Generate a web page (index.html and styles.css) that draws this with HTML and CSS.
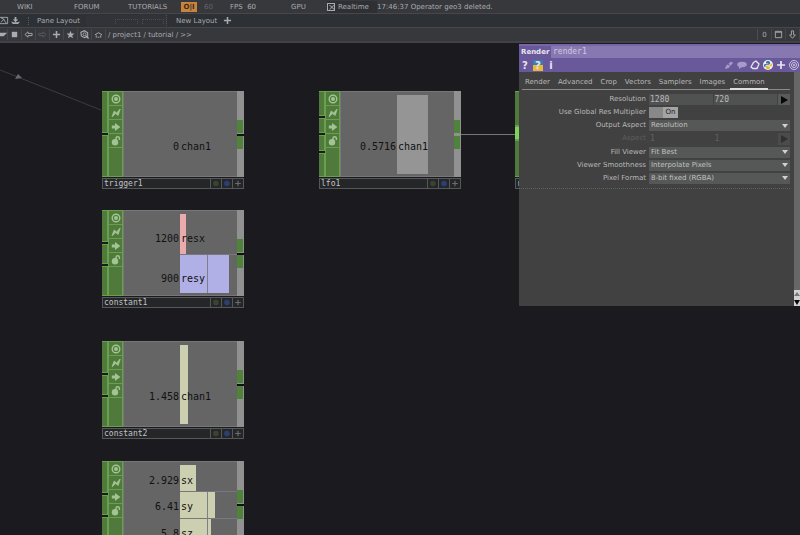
FILE: index.html
```html
<!DOCTYPE html>
<html lang="en">
<head>
<meta charset="utf-8">
<title>Network editor</title>
<link rel="stylesheet" href="styles.css">
</head>
<body>
<svg class="defs" aria-hidden="true">
  <symbol id="target" viewBox="0 0 10 10"><circle cx="5" cy="5" r="3.8" fill="none" stroke="currentColor" stroke-width="1.4"/><circle cx="5" cy="5" r="2" fill="currentColor"/></symbol>
  <symbol id="bolt" viewBox="0 0 10 10"><path d="M1 8.8 3.2 3 5.5 5 9.2 1 7.2 7.4 4.6 5.600Z" fill="currentColor" stroke="currentColor" stroke-width=".8"/></symbol>
  <symbol id="go" viewBox="0 0 10 10"><path d="M.8 3.4h3.2V.9L9.400 5 4 9.100V6.600H.8Z" fill="currentColor"/></symbol>
  <symbol id="lock" viewBox="0 0 10 10"><circle cx="4" cy="6.300" r="3.200" fill="currentColor"/><path d="M5 4V2.500a1.700 1.700 0 0 1 3.400 0V4" fill="none" stroke="currentColor" stroke-width="1.500"/></symbol>
  <symbol id="plus" viewBox="0 0 10 10"><path d="M5 1v8M1 5h8" fill="none" stroke="currentColor" stroke-width="1.7"/></symbol>
  <symbol id="dot" viewBox="0 0 10 10"><path d="M3 1h4l2 3v2.500L6.500 9H3L1 6.500V3Z" fill="currentColor"/></symbol>
  <symbol id="star" viewBox="0 0 10 10"><path d="M5 .8 6.2 3.8 9.4 4 6.9 6 7.800 9.200 5 7.400 2.200 9.200 3.100 6 .6 4 3.800 3.800Z" fill="currentColor"/></symbol>
  <symbol id="left" viewBox="0 0 10 10"><path d="M1 5 4.500 2V3.800H9V6.200H4.500V8Z" fill="none" stroke="currentColor"/></symbol>
  <symbol id="right" viewBox="0 0 10 10"><path d="M9 5 5.500 2V3.800H1V6.200H5.500V8Z" fill="none" stroke="currentColor"/></symbol>
  <symbol id="down" viewBox="0 0 10 10"><path d="M5 9.200 1.800 5.500H3.800V1H6.200V5.500H8.200Z" fill="none" stroke="currentColor"/></symbol>
  <symbol id="home" viewBox="0 0 10 10"><path d="M1 5.500 5 3l4 2.500M2.500 6v2.500M7.500 6v2.500M4 8h2" fill="none" stroke="currentColor" stroke-width="1.1"/></symbol>
  <symbol id="find" viewBox="0 0 10 10"><path d="M1 2.500 5 .8 8.500 3v4L5 8.500 1.500 6.500Z" fill="none" stroke="currentColor" stroke-width="1.200"/><circle cx="5" cy="4.800" r="1.600" fill="none" stroke="currentColor"/><path d="m6.500 6.500 3 3" stroke="currentColor" stroke-width="1.500"/></symbol>
</svg>

<header>
  <nav class="bar menu">
    <a href="#" class="wiki">WIKI</a><a href="#" class="forum">FORUM</a><a href="#" class="tutorials">TUTORIALS</a>
    <button class="oii">O|I</button><span class="rate">60</span><span class="fps">FPS&nbsp; 60</span><span class="gpu">GPU</span>
    <label class="realtime"><input type="checkbox" checked>Realtime</label>
    <output class="message">17:46:37 Operator geo3 deleted.</output>
  </nav>
  <div class="bar layouts">
    <button aria-label="Image"><svg viewBox="0 0 10 10"><path d="M0 1.500h8.500v7H0M1 7l3-3 3 4M1 2l4 2" fill="none" stroke="currentColor"/></svg></button>
    <button aria-label="Save"><svg viewBox="0 0 10 10"><path d="M4 1h2v3h2L5 7 2 4h2ZM0 6l2 3h6l2-3-3 1H3Z" fill="currentColor"/></svg></button>
    <span class="grip"></span>
    <span class="pane-label">Pane Layout</span>
    <span class="slots"><i></i><i></i></span>
    <span class="new-label">New Layout</span>
    <button aria-label="Add layout"><svg><use href="#plus"/></svg></button>
  </div>
  <div class="bar path">
    <button class="first" aria-label="Pane type"><svg viewBox="0 0 10 10"><path d="M0 3h8L4 7H0Z" fill="currentColor"/></svg></button>
    <button aria-label="Stop"><svg viewBox="0 0 10 10"><path d="M2 2h6v6H2Z" fill="currentColor"/></svg></button>
    <button aria-label="Back"><svg><use href="#left"/></svg></button>
    <button class="dim" aria-label="Forward"><svg><use href="#right"/></svg></button>
    <button aria-label="Add"><svg><use href="#plus"/></svg></button>
    <button aria-label="Bookmark"><svg><use href="#star"/></svg></button>
    <button aria-label="Find"><svg><use href="#find"/></svg></button>
    <button aria-label="Home"><svg><use href="#home"/></svg></button>
    <span class="crumbs">/ project1 / tutorial / &gt;&gt;</span>
    <div class="pane-tools">
      <button>0</button>
      <button aria-label="Maximize"><svg viewBox="0 0 10 10"><path d="M1.500 1.500h7v7h-7ZM1.500 2.500h7" fill="none" stroke="currentColor"/></svg></button>
      <button aria-label="Split"><svg><use href="#down"/></svg></button>
    </div>
  </div>
</header>

<main class="network">
  <svg class="wires" aria-hidden="true">
    <path d="M0 27 101 67" stroke="#3c3c42"/><path d="M15 36 18 31 22 35Z" fill="#666872"/>
    <path d="M461 91.500H516" stroke="#77777a"/>
  </svg>

  <article class="node trigger">
    <div class="inputs"><i></i><i></i></div>
    <div class="flags"><button aria-label="Viewer"><svg><use href="#target"/></svg></button><button aria-label="Clone"><svg><use href="#bolt"/></svg></button><button aria-label="Bypass"><svg><use href="#go"/></svg></button><button aria-label="Lock"><svg><use href="#lock"/></svg></button></div>
    <div class="view"><div class="chan"><span class="val">0</span><span class="name">chan1</span></div></div>
    <div class="outputs"><i></i><i></i></div>
    <footer><span>trigger1</span><svg class="g"><use href="#dot"/></svg><svg class="b"><use href="#dot"/></svg><svg><use href="#plus"/></svg></footer>
  </article>

  <article class="node lfo">
    <div class="inputs four"><i></i><i></i><i></i><i></i></div>
    <div class="flags"><button aria-label="Viewer"><svg><use href="#target"/></svg></button><button aria-label="Clone"><svg><use href="#bolt"/></svg></button><button aria-label="Bypass"><svg><use href="#go"/></svg></button><button aria-label="Lock"><svg><use href="#lock"/></svg></button></div>
    <div class="view"><div class="chan"><span class="val">0.5716</span><span class="name gray" style="--w:31px">chan1</span></div></div>
    <div class="outputs linked"><i></i><i></i></div>
    <footer><span>lfo1</span><svg class="g"><use href="#dot"/></svg><svg class="b"><use href="#dot"/></svg><svg><use href="#plus"/></svg></footer>
  </article>

  <article class="node constant1">
    <div class="inputs three"><i></i><i></i><i></i></div>
    <div class="flags"><button aria-label="Viewer"><svg><use href="#target"/></svg></button><button aria-label="Clone"><svg><use href="#bolt"/></svg></button><button aria-label="Bypass"><svg><use href="#go"/></svg></button><button aria-label="Lock"><svg><use href="#lock"/></svg></button></div>
    <div class="view"><div class="chan"><span class="val">1200</span><span class="name pink" style="--w:6px">resx</span></div><div class="chan"><span class="val">900</span><span class="name lilac tick" style="--w:49px">resy</span></div></div>
    <div class="outputs"><i></i><i></i></div>
    <footer><span>constant1</span><svg class="g"><use href="#dot"/></svg><svg class="b"><use href="#dot"/></svg><svg><use href="#plus"/></svg></footer>
  </article>

  <article class="node constant2">
    <div class="inputs three"><i></i><i></i><i></i></div>
    <div class="flags"><button aria-label="Viewer"><svg><use href="#target"/></svg></button><button aria-label="Clone"><svg><use href="#bolt"/></svg></button><button aria-label="Bypass"><svg><use href="#go"/></svg></button><button aria-label="Lock"><svg><use href="#lock"/></svg></button></div>
    <div class="view"><div class="chan"><span class="val">1.458</span><span class="name cream" style="--w:8px">chan1</span></div></div>
    <div class="outputs"><i></i><i></i></div>
    <footer><span>constant2</span><svg class="g"><use href="#dot"/></svg><svg class="b"><use href="#dot"/></svg><svg><use href="#plus"/></svg></footer>
  </article>

  <article class="node scale">
    <div class="inputs three"><i></i><i></i><i></i></div>
    <div class="flags"><button aria-label="Viewer"><svg><use href="#target"/></svg></button><button aria-label="Clone"><svg><use href="#bolt"/></svg></button><button aria-label="Bypass"><svg><use href="#go"/></svg></button><button aria-label="Lock"><svg><use href="#lock"/></svg></button></div>
    <div class="view"><div class="chan"><span class="val">2.929</span><span class="name cream" style="--w:16px">sx</span></div><div class="chan"><span class="val">6.41</span><span class="name cream tick" style="--w:35px">sy</span></div><div class="chan"><span class="val">5.8</span><span class="name cream tick" style="--w:31px">sz</span></div></div>
    <div class="outputs"><i></i><i></i></div>
    <footer></footer>
  </article>

  <article class="node target">
    <div class="inputs single"><i></i><i></i><i></i></div>
    <div class="flags"></div><div class="view"></div><div class="outputs"></div>
    <footer><span>r</span></footer>
  </article>

  <section class="params">
    <div class="head">
      <div class="title"><label for="opname">Render</label><input id="opname" value="render1"></div>
      <div class="tools">
        <button>?</button>
        <button class="pyhelp">?</button>
        <button>i</button>
        <span class="spacer"></span>
        <button class="soft" aria-label="Edit"><svg viewBox="0 0 10 10"><path d="M1 9 2 6 7 1.500 9 3 4.500 8Z" fill="currentColor"/><path d="m4 4 2.500 2" stroke="#6a5a96"/></svg></button>
        <button class="soft" aria-label="Comment"><svg viewBox="0 0 10 10"><ellipse cx="5" cy="4.500" rx="4.800" ry="2.800" fill="currentColor"/><path d="M2 6v3l3-2" fill="currentColor"/></svg></button>
        <button aria-label="Copy"><svg viewBox="0 0 10 10"><path d="M3.500 2.500 6 1l3 3-2 4.500H3L1 7Z" fill="none" stroke="currentColor" stroke-width="1.300"/></svg></button>
        <button aria-label="Python"><svg viewBox="0 0 10 10"><circle cx="5" cy="5" r="5" fill="#f3f3f5"/><path d="M5 1C3.500 1 3 1.600 3 2.500v1h2.300V4H2C1 4 .8 5 1 6c.2.800.7 1.200 1.500 1.200V6c0-.8.500-1.300 1.300-1.300h2C6.600 4.700 7 4.200 7 3.500v-1C7 1.600 6.400 1 5 1Z" fill="#3674a8"/><path d="M5 9.200c1.500 0 2-.6 2-1.500v-.900H4.800v-.500H8c1 0 1.200-.8 1-1.900-.2-.9-.7-1.200-1.500-1.200v1c0 .8-.5 1.300-1.300 1.300h-2C3.400 5.500 3 6 3 6.700v1c0 .9.600 1.500 2 1.500Z" fill="#e9b92e"/></svg></button>
        <button aria-label="Add parameter"><svg><use href="#plus"/></svg></button>
        <button aria-label="Viewer"><svg viewBox="0 0 10 10"><g fill="none" stroke="#cbc3df"><circle cx="5" cy="5" r="4.500"/><circle cx="5" cy="5" r="2.500"/></g><circle cx="5" cy="5" r="1" fill="#cbc3df"/></svg></button>
      </div>
    </div>
    <div class="content">
      <div class="page">
        <nav class="tabs"><a href="#">Render</a><a href="#">Advanced</a><a href="#">Crop</a><a href="#">Vectors</a><a href="#">Samplers</a><a href="#">Images</a><a href="#" class="on">Common</a></nav>
        <form>
          <label for="resw">Resolution</label><div class="pair"><input id="resw" value="1280"><input aria-label="Resolution height" value="720"><button type="button" aria-label="Resolution menu"></button></div>
          <label for="mult">Use Global Res Multiplier</label><button type="button" id="mult" class="switch"><span>On</span></button>
          <label for="oa">Output Aspect</label><div class="drop"><select id="oa"><option>Resolution</option></select></div>
          <label class="off" for="asp">Aspect</label><div class="pair off"><input id="asp" value="1" disabled><input aria-label="Aspect height" value="1" disabled><button type="button" aria-label="Aspect menu" disabled></button></div>
          <label for="fv">Fill Viewer</label><div class="drop"><select id="fv"><option>Fit Best</option></select></div>
          <label for="vs">Viewer Smoothness</label><div class="drop"><select id="vs"><option>Interpolate Pixels</option></select></div>
          <label for="pf">Pixel Format</label><div class="drop"><select id="pf"><option>8-bit fixed (RGBA)</option></select></div>
        </form>
      </div>
      <div class="scroll"><button aria-label="Scroll up" class="up"></button><button aria-label="Scroll down" class="dn"></button></div>
    </div>
  </section>
</main>
</body>
</html>
```
FILE: styles.css
```css
* { box-sizing: border-box; }
body {
  margin: 0; height: 100vh; overflow: hidden;
  display: flex; flex-direction: column;
  background: #1b1a1f; color: #a9abb0;
  font: 7px/12px "DejaVu Sans", sans-serif;
}
button, input, select { font: inherit; color: inherit; background: none; border: 0; padding: 0; margin: 0; border-radius: 0; }
a { color: inherit; text-decoration: none; }
svg { display: block; width: 9px; height: 9px; }
.defs { position: absolute; width: 0; height: 0; }

/* Toolbars */
.bar { display: flex; align-items: center; height: 14px; white-space: nowrap; background: #37383c; border-bottom: 1px solid #46474a; }
.wiki { width: 57px; margin-left: 17px; }
.forum { width: 54px; }
.tutorials { width: 53px; }
.oii { width: 16px; height: 10px; line-height: 10px; background: #c8843f; color: #3a2a1c; font-weight: bold; }
.rate { width: 26px; padding-left: 7px; color: #626469; }
.fps { width: 61px; padding-left: 7px; }
.gpu { width: 43px; padding-left: 7px; }
.realtime { display: flex; align-items: center; gap: 3px; width: 50px; background: #2e3034; }
.realtime input { appearance: none; width: 8px; height: 8px; border: 1px solid #a9abb0; display: grid; place-items: center; }
.realtime input:checked::after { content: "×"; font-size: 9px; line-height: 6px; }
.layouts { background: #2d3034; }
.layouts button { width: 15px; display: grid; place-items: center; }
.layouts button:first-child { width: 8px; }
.grip { width: 6px; height: 8px; border-right: 1px dotted #55575c; }
.pane-label { width: 57px; padding-left: 8px; }
.slots { display: flex; align-items: end; gap: 4px; width: 81px; height: 11px; padding: 0 2px 2px 29px; background: #313338; border-right: 1px dotted #55575c; }
.slots i { flex: 1; height: 5px; border: 1px dotted #4b4d52; border-bottom: 0; }
.new-label { width: 53px; padding-left: 9px; }
.path { height: 15px; border-bottom: 2px solid #404247; }
.path button { width: 14px; height: 11px; display: grid; place-items: center; border-right: 1px solid #45474c; }
.path .first { width: 8px; }
.path .dim { color: #595b61; }
.crumbs { padding-left: 2px; }
.pane-tools { display: flex; margin-left: auto; border-left: 1px solid #4b4d52; }

/* Network canvas */
.network { position: relative; flex: 1; overflow: hidden; }
.wires { position: absolute; inset: 0; width: 100%; height: 100%; fill: none; }
.node {
  position: absolute; width: 142px; height: 98px;
  display: grid; grid-template: 86px 11px / 6px 15px 1fr 7px; row-gap: 1px;
  color: #111; font: 10px/12px "DejaVu Sans Mono", monospace;
}
.trigger { left: 102px; top: 48px; }
.lfo { left: 319px; top: 48px; }
.constant1 { left: 102px; top: 167px; }
.constant2 { left: 102px; top: 298px; }
.scale { left: 102px; top: 418px; }
.target { left: 515px; top: 48px; }
.inputs { display: grid; grid-template-rows: 42px 1fr; gap: 2px; }
.inputs.three { grid-template-rows: 32px 20px 1fr; }
.inputs.four { grid-template-rows: 25px 15px 16px 1fr; }
.inputs i { background: #4f7a3b; border: solid #69a04d; border-width: 1px 1px 1px 0; }
.inputs.single { grid-template-rows: 35px 14px 1fr; gap: 0; }
.inputs.single i:nth-child(2) { background: #7fd05c; }
.flags { display: flex; flex-direction: column; background: #4f7a3b; border: 1px solid #69a04d; border-left: 0; }
.flags button { height: 14px; display: grid; place-items: center; border: solid #69a04d; border-width: 0 0 1px 1px; color: #a2c492; }
.flags svg { width: 10px; height: 10px; }
.flags::after { content: ""; flex: 1; border-left: 1px solid #69a04d; }
.view { display: flex; flex-direction: column; padding: 3px 0 2px; background: #656565; border: solid #777; border-width: 1px 0 1px 1px; overflow: hidden; }
.chan { flex: 1; display: grid; grid-template-columns: 56px 1fr; }
.val, .name { display: flex; flex-direction: column; }
.val { align-items: end; padding-right: 1px; }
.val::before, .name::before { content: ""; flex: 9; }
.val::after, .name::after { content: ""; flex: 4; }
.name { padding-left: 1px; background: linear-gradient(var(--bar, transparent) 0 0) 0 0 / var(--w, 0) 100% no-repeat; }
.tick { background-image: linear-gradient(90deg, var(--bar) 27px, #7f7f86 27px 28px, var(--bar) 28px); box-shadow: inset 0 1px #77777c; }
.gray { --bar: #959595; }
.pink { --bar: #e9abab; }
.lilac { --bar: #b0afe6; }
.cream { --bar: #cccfb0; }
.outputs { display: grid; grid-template-rows: 13px 13px; gap: 3px; align-content: center; padding-top: 1px; background: linear-gradient(#101012 0 0) 0 43px / 7px 2px no-repeat #919191; }
.outputs.linked { background: #919191; }
.outputs i { background: #4f823b; margin-right: 1px; }
.node footer { grid-column: 1 / -1; display: flex; background: #252628; border: 1px solid #55575a; color: #c2c4c6; font-size: 8px; line-height: 9px; }
.node footer span { flex: 1; padding-left: 1px; }
.node footer svg { width: 11px; height: 9px; padding: 1px; border-left: 1px solid #55575a; color: #6a6b6d; }
.node footer .g { color: #39442f; }
.node footer .b { color: #2b3f70; }

/* Parameter panel */
.params { position: absolute; top: 1px; right: 0; width: 281px; height: 262px; display: flex; flex-direction: column; background: #414141; color: #b8b8b8; }
.head { background: #69599a; color: #e8e5f0; border-top: 2px solid #7766a5; }
.title { display: flex; height: 12px; font-weight: bold; }
.title label { width: 32px; padding-left: 2px; }
.title input { flex: 1; min-width: 0; padding-left: 2px; background: #8878b1; color: #d0c8e2; font: 8px/12px "DejaVu Sans Mono", monospace; }
.tools { display: flex; gap: 3px; height: 14px; align-items: center; padding: 0 1px; }
.tools button { width: 10px; height: 11px; display: grid; place-items: center; font-size: 10px; line-height: 11px; font-weight: bold; }
.tools svg { width: 10px; height: 10px; }
.tools .pyhelp { background: linear-gradient(#3c7cb0 50%, #e6b93a 50%); }
.tools .soft { color: #a99bc9; }
.spacer { flex: 1; }
.content { flex: 1; display: flex; min-height: 0; }
.page { flex: 1; min-width: 0; padding: 3px 4px 0 0; }
.tabs { display: flex; gap: 2px; margin-left: 3px; height: 15px; border-bottom: 1px solid #8a8a8a; line-height: 15px; }
.tabs a { padding: 0 3px; height: 15px; }
.tabs .on { border-bottom: 2px solid #dedede; }
form { display: grid; grid-template-columns: 127px minmax(0, 1fr); grid-auto-rows: 1fr; column-gap: 3px; height: 99px; padding: 3px 0; border-bottom: 1px dotted #606060; }
form > label { text-align: right; line-height: 13px; }
form > label.off { color: #5e5e5e; }
.pair, .drop { display: flex; gap: 1px; margin: 1px 0; }
.pair input { flex: 1; min-width: 0; padding-left: 1px; background: #505151; font: 8px/11px "DejaVu Sans Mono", monospace; }
.pair button { width: 12px; background: #5a5a5a; color: #080808; display: grid; place-items: center; }
.pair button::after { content: ""; border: 4px solid transparent; border-left: 7px solid currentColor; border-right: 0; }
.pair.off input { background: none; color: #626262; }
.pair.off button { background: #4b4b4b; color: #303030; }
.drop { background: #555857; align-items: center; }
.drop select { flex: 1; min-width: 0; appearance: none; padding-left: 2px; color: #c0c0c0; line-height: 11px; }
.drop::after { content: ""; margin-right: 2px; border: 3px solid transparent; border-top: 4px solid #d0d0d0; border-bottom: 0; }
.switch { width: 29px; margin: 1px 0; display: flex; justify-content: flex-end; background: #888; }
.switch span { width: 15px; height: 100%; line-height: 11px; background: #a4a4a4; color: #222; }
.scroll { width: 6px; display: flex; flex-direction: column; justify-content: flex-end; background: #676767; }
.scroll button { height: 8px; background: #d2d2d2; display: grid; place-items: center; }
.scroll button::after { content: ""; border: 0 solid transparent; border-width: 0 3px; }
.scroll .up::after { border-bottom: 4px solid #777; }
.scroll .dn::after { border-top: 5px solid #080808; }
```
